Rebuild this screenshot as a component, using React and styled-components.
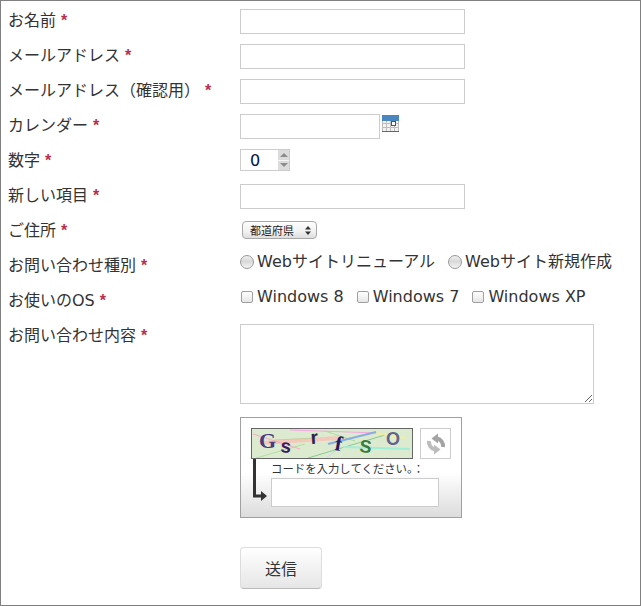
import React from 'react';
import styled, { createGlobalStyle } from 'styled-components';

const Global = createGlobalStyle`
  html, body {
    margin: 0;
    padding: 0;
    background: #fff;
  }
  * {
    box-sizing: border-box;
  }
`;

const Page = styled.form`
  width: 641px;
  height: 606px;
  padding-top: 2px;
  border: 1px solid #808080;
  overflow: hidden;
  background: #fff;
  color: #333;
  font-family: 'DejaVu Sans', 'Noto Sans CJK JP', sans-serif;
  font-size: 16px;
`;

const Row = styled.div`
  display: grid;
  grid-template-columns: 239px 1fr;
  min-height: 35px;
`;

const Label = styled.label`
  padding-left: 7px;
  line-height: 35px;
  white-space: pre;
`;

const Star = styled.span`
  margin-left: 5px;
  color: #b5304f;
  font-family: 'Liberation Sans', sans-serif;
  font-weight: bold;
`;

const Field = styled.div`
  display: flex;
  align-items: flex-start;
  padding-top: ${props => props.$top || 0}px;
`;

const TextInput = styled.input`
  width: ${props => props.$width || 225}px;
  height: ${props => props.$height || 25}px;
  padding: 2px 4px;
  border: 1px solid #ccc;
  border-radius: 0;
  outline: none;
  background: #fff;
`;

const CalendarIcon = styled.svg`
  width: 17px;
  height: 17px;
  margin: 1px 0 0 2px;
`;

const NumberBox = styled.div`
  display: flex;
  width: 50px;
  height: 22px;
  border: 1px solid #ccc;
`;

const NumberInput = styled.input`
  width: 37px;
  height: 20px;
  padding: 0 0 0 9px;
  border: 0;
  outline: none;
  color: #00104a;
  font: 16px 'DejaVu Sans', sans-serif;
`;

const Spinner = styled.div`
  display: grid;
  grid-template-rows: 1fr 1fr;
  gap: 1px;
  width: 11px;
  margin-left: auto;
  background: #f5f5f5;
`;

const SpinButton = styled.span`
  display: flex;
  align-items: center;
  justify-content: center;
  background: #dcdcdc;
  &::before {
    content: '';
    border-left: 4px solid transparent;
    border-right: 4px solid transparent;
    border-${props => (props.$down ? 'top' : 'bottom')}: 4px solid #8c8c8c;
  }
`;

const SelectBox = styled.div`
  position: relative;
  width: 75px;
  height: 18px;
  margin-left: 2px;
`;

const Select = styled.select`
  appearance: none;
  display: block;
  width: 100%;
  height: 100%;
  padding: 0 0 0 7px;
  border: 1px solid #a8a8a8;
  border-radius: 4px;
  outline: none;
  background: linear-gradient(#fdfdfd, #f1f1f1 60%, #dedede);
  color: #222;
  font: 11px 'Noto Sans CJK JP', sans-serif;
`;

const SelectArrows = styled.svg`
  position: absolute;
  top: 5px;
  right: 6px;
  width: 6px;
  height: 9px;
  pointer-events: none;
`;

const Choices = styled.div`
  display: flex;
  align-items: center;
  height: 26px;
  line-height: 26px;
`;

const Choice = styled.label`
  display: flex;
  align-items: center;
  margin-right: ${props => props.$after}px;
  white-space: nowrap;
`;

const Radio = styled.input.attrs({ type: 'radio' })`
  appearance: none;
  width: 14px;
  height: 14px;
  margin: 0 3px 0 0;
  border: 1px solid #9a9a9a;
  border-radius: 50%;
  background: linear-gradient(#f0f0f0, #d8d8d8 45%, #f4f4f4);
`;

const Check = styled.input.attrs({ type: 'checkbox' })`
  appearance: none;
  width: 12px;
  height: 12px;
  margin: 0 4px 0 1px;
  border: 1px solid #a0a0a0;
  border-radius: 2px;
  background: linear-gradient(#fff, #e6e6e6);
`;

const TextArea = styled.textarea`
  display: block;
  width: 354px;
  height: 80px;
  border: 1px solid #ccc;
  border-radius: 0;
  outline: none;
`;

const CaptchaBox = styled.div`
  width: 222px;
  height: 101px;
  margin-top: 13px;
  padding: 10px;
  border: 1px solid #a0a0a0;
  background: linear-gradient(#fff, #fff 55%, #dcdcdc);
`;

const CaptchaTop = styled.div`
  display: flex;
  gap: 7px;
`;

const CaptchaImage = styled.svg`
  display: block;
  width: 162px;
  height: 31px;
  border: 1px solid #666;
  background: #dcebd0;
`;

const RefreshButton = styled.button`
  display: flex;
  align-items: center;
  justify-content: center;
  width: 31px;
  height: 31px;
  padding: 0;
  border: 1px solid #ccc;
  background: #fff;
`;

const CaptchaBottom = styled.div`
  display: flex;
  gap: 4px;
  margin-left: 2px;
`;

const ArrowIcon = styled.svg`
  flex: none;
  width: 14px;
  height: 42px;
`;

const CaptchaLabel = styled.div`
  height: 19px;
  color: #333;
  font-size: 11.4px;
  line-height: 20px;
  white-space: nowrap;
`;

const SubmitRow = styled.div`
  margin: 29px 0 0 239px;
`;

const SubmitButton = styled.button`
  width: 82px;
  height: 42px;
  padding: 0;
  border: 1px solid #ddd;
  border-bottom-color: #bbb;
  border-radius: 4px;
  background: linear-gradient(#fff, #e6e6e6);
  color: #333;
  font: 16px 'DejaVu Sans', 'Noto Sans CJK JP', sans-serif;
`;

const letters = [
  { ch: 'G', x: 7, y: 19, size: 22, color: '#4b3a80', font: 'Liberation Serif', rotate: 0 },
  { ch: 's', x: 28, y: 23, size: 19, color: '#3a1a60', font: 'Liberation Sans', rotate: 6 },
  { ch: 'r', x: 59, y: 15, size: 19, color: '#2c2450', font: 'Liberation Sans', rotate: -4 },
  { ch: 'f', x: 82, y: 21, size: 21, color: '#2a1560', font: 'Liberation Serif', rotate: 10 },
  { ch: 'S', x: 107, y: 23, size: 18, color: '#3a7a3a', font: 'Liberation Sans', rotate: 6 },
  { ch: 'O', x: 134, y: 16, size: 18, color: '#62628e', font: 'Liberation Sans', rotate: 0 }
];

const noise = [
  ['M9 14 L86 9', '#f5c8bc', 4],
  ['M1 5 L48 20', '#f7a8c8', 1],
  ['M38 1 L126 4', '#f5a8e0', 1],
  ['M22 11 L64 9', '#c8d0a0', 1],
  ['M73 2 L103 12', '#a6e0a0', 1],
  ['M4 29 L53 15', '#b4dca0', 1],
  ['M56 29 L133 6', '#8cc890', 1],
  ['M124 4 L153 9', '#eef0a0', 2],
  ['M73 30 L86 20', '#c8d4ee', 1],
  ['M76 15 L124 3', '#88aede', 2],
  ['M91 18 L158 20', '#a0eed8', 2]
];

function Required({ children }) {
  return (
    <Label>
      {children}
      <Star>*</Star>
    </Label>
  );
}

function Captcha() {
  return (
    <CaptchaBox>
      <CaptchaTop>
        <CaptchaImage viewBox="0 0 160 29">
          {noise.map(([d, color, width]) => (
            <path key={d} d={d} stroke={color} strokeWidth={width} fill="none" />
          ))}
          {letters.map(l => (
            <text
              key={l.ch}
              x={l.x}
              y={l.y}
              fontSize={l.size}
              fontFamily={l.font}
              fontWeight="bold"
              fill={l.color}
              transform={`rotate(${l.rotate} ${l.x} ${l.y})`}
            >
              {l.ch}
            </text>
          ))}
        </CaptchaImage>
        <RefreshButton type="button" aria-label="refresh">
          <svg width="22" height="22" viewBox="0 0 22 22">
            <path d="M18 14 A7.5 7.5 0 0 0 12 5.5" stroke="#a4a4a4" strokeWidth="4" fill="none" />
            <path d="M13 0.5 V10.5 L6.5 5.5 Z" fill="#a4a4a4" />
            <path d="M4 8 A7.5 7.5 0 0 0 10 16.5" stroke="#bcbcbc" strokeWidth="4" fill="none" />
            <path d="M9 11.5 V21.5 L15.5 16.5 Z" fill="#bcbcbc" />
          </svg>
        </RefreshButton>
      </CaptchaTop>
      <CaptchaBottom>
        <ArrowIcon viewBox="0 0 14 42">
          <path d="M1.5 0 V37 H9" stroke="#333" strokeWidth="3" fill="none" />
          <path d="M8 32 L14 37 L8 42 Z" fill="#333" />
        </ArrowIcon>
        <div>
          <CaptchaLabel>コードを入力してください。：</CaptchaLabel>
          <TextInput $width={168} $height={29} />
        </div>
      </CaptchaBottom>
    </CaptchaBox>
  );
}

export default function App() {
  return (
    <Page onSubmit={e => e.preventDefault()}>
      <Global />
      <Row>
        <Required>お名前</Required>
        <Field $top={6}>
          <TextInput />
        </Field>
      </Row>
      <Row>
        <Required>メールアドレス</Required>
        <Field $top={6}>
          <TextInput />
        </Field>
      </Row>
      <Row>
        <Required>メールアドレス（確認用）</Required>
        <Field $top={6}>
          <TextInput />
        </Field>
      </Row>
      <Row>
        <Required>カレンダー</Required>
        <Field $top={6}>
          <TextInput $width={140} />
          <CalendarIcon viewBox="0 0 17 17">
            <rect width="17" height="17" fill="#f2f2f2" />
            <path d="M0.5 5 V16 M4.5 5 V16 M8.5 5 V16 M12.5 5 V16 M16.5 5 V16 M0 8.5 H17 M0 12.5 H17" stroke="#bdbdbd" />
            <rect width="17" height="6" fill="#4a86c0" />
            <rect x="9.5" y="6.5" width="4" height="4" fill="#fff" stroke="#a83030" />
            <path d="M0 16.5 H17" stroke="#666" />
          </CalendarIcon>
        </Field>
      </Row>
      <Row>
        <Required>数字</Required>
        <Field $top={6}>
          <NumberBox>
            <NumberInput defaultValue="0" />
            <Spinner>
              <SpinButton />
              <SpinButton $down />
            </Spinner>
          </NumberBox>
        </Field>
      </Row>
      <Row>
        <Required>新しい項目</Required>
        <Field $top={6}>
          <TextInput />
        </Field>
      </Row>
      <Row>
        <Required>ご住所</Required>
        <Field $top={8}>
          <SelectBox>
            <Select>
              <option>都道府県</option>
            </Select>
            <SelectArrows viewBox="0 0 6 9">
              <path d="M3 0 L6 3.5 H0 Z M3 9 L0 5.5 H6 Z" fill="#333" />
            </SelectArrows>
          </SelectBox>
        </Field>
      </Row>
      <Row>
        <Required>お問い合わせ種別</Required>
        <Field $top={1}>
          <Choices>
            <Choice $after={13}>
              <Radio name="kind" />
              Webサイトリニューアル
            </Choice>
            <Choice $after={0}>
              <Radio name="kind" />
              Webサイト新規作成
            </Choice>
          </Choices>
        </Field>
      </Row>
      <Row>
        <Required>お使いのOS</Required>
        <Field $top={1}>
          <Choices>
            <Choice $after={12}>
              <Check />
              Windows 8
            </Choice>
            <Choice $after={12}>
              <Check />
              Windows 7
            </Choice>
            <Choice $after={0}>
              <Check />
              Windows XP
            </Choice>
          </Choices>
        </Field>
      </Row>
      <Row>
        <Required>お問い合わせ内容</Required>
        <Field $top={6}>
          <TextArea />
        </Field>
      </Row>
      <Row>
        <div />
        <div>
          <Captcha />
        </div>
      </Row>
      <SubmitRow>
        <SubmitButton type="submit">送信</SubmitButton>
      </SubmitRow>
    </Page>
  );
}
